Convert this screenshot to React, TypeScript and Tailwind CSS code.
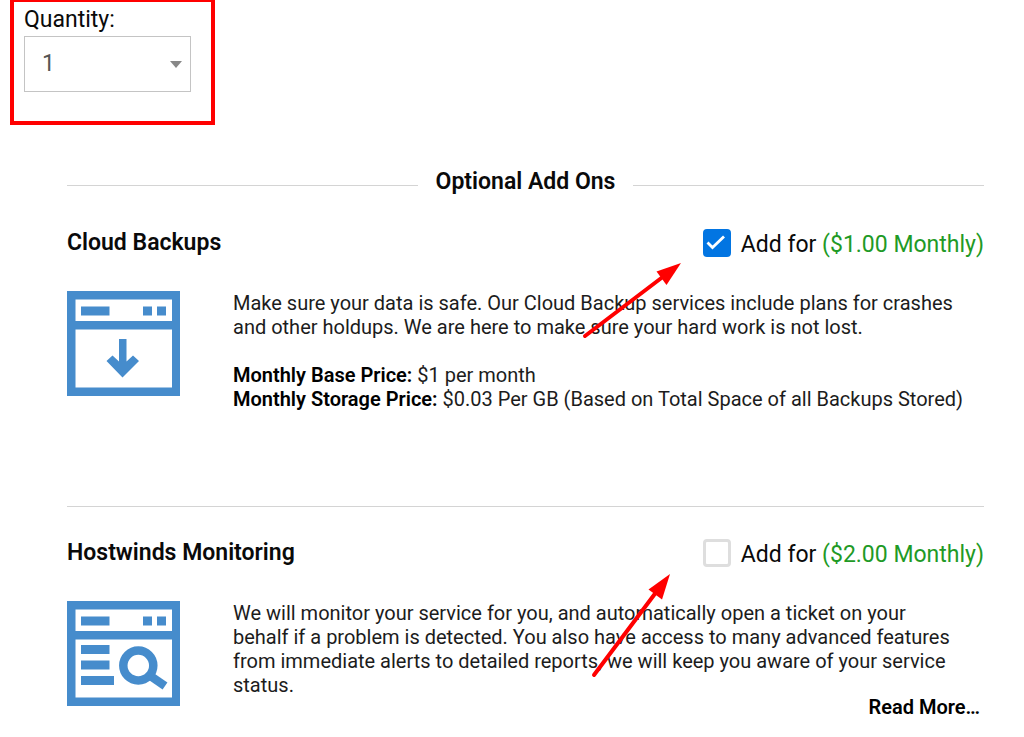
import { useState, type ReactNode } from "react";

type AddOnProps = {
  id: string;
  title: string;
  price: string;
  checked: boolean;
  onChange: (checked: boolean) => void;
  icon: ReactNode;
  arrow: ReactNode;
  children: ReactNode;
};

function WindowIcon({ children }: { children: ReactNode }) {
  return (
    <svg viewBox="0 0 113 105" className="h-[105px] w-[113px] shrink-0" fill="#468ccc" aria-hidden="true">
      <path fillRule="evenodd" d="M0 0H113V105H0ZM8.5 8.5V30H105V8.5ZM8.5 38.5V96.5H105V38.5Z" />
      <path d="M14 15.5H42.5V24.5H14ZM76 15.5H85V24.5H76ZM90 15.5H99V24.5H90Z" />
      {children}
    </svg>
  );
}

function BackupIcon() {
  return (
    <WindowIcon>
      <path d="M52 48H59.5V70.5L66 64.5L72 70L55.5 86.5L39.5 70L45.5 64.5L52 70.5Z" />
    </WindowIcon>
  );
}

function MonitoringIcon() {
  return (
    <WindowIcon>
      <path d="M14 44H42.5V53H14ZM14 59.5H42.5V68.5H14ZM14 75H47V84H14Z" />
      <circle cx="71.3" cy="64.5" r="15" fill="none" stroke="#468ccc" strokeWidth="8.5" />
      <path d="M82 74L98 85" fill="none" stroke="#468ccc" strokeWidth="8.5" />
    </WindowIcon>
  );
}

function AddOn({ id, title, price, checked, onChange, icon, arrow, children }: AddOnProps) {
  return (
    <section className="relative">
      <div className="flex items-start justify-between">
        <h3 className="text-[23px] leading-7 font-semibold">{title}</h3>
        <div className="flex items-start gap-2.5">
          <span className="relative h-7 w-7">
            <input
              id={id}
              type="checkbox"
              checked={checked}
              onChange={(event) => onChange(event.target.checked)}
              className="block h-7 w-7 appearance-none rounded border-[3px] border-[#dedede] bg-white checked:border-[#0275e2] checked:bg-[#0275e2]"
            />
            {checked ? (
              <svg viewBox="0 0 28 28" className="pointer-events-none absolute inset-0 h-7 w-7" aria-hidden="true">
                <path d="M4.5 13.5L9.5 18.5L21 7.5" fill="none" stroke="#fff" strokeWidth="2.8" />
              </svg>
            ) : null}
          </span>
          <label htmlFor={id} className="pt-0.5 text-[23px] leading-7">
            Add for <span className="text-[#1f9a26]">{price}</span>
          </label>
        </div>
      </div>
      <div className="mt-8 flex items-start gap-[53px]">
        {icon}
        <div className="min-w-0 flex-1 text-[20px] leading-6 text-[#1c1c1c]">{children}</div>
      </div>
      {arrow}
    </section>
  );
}

export default function App() {
  const [quantity, setQuantity] = useState("1");
  const [backups, setBackups] = useState(true);
  const [monitoring, setMonitoring] = useState(false);

  return (
    <main className="bg-white font-['Roboto',sans-serif] text-[#0a0a0a]">
      <div className="ml-[10px] h-[125px] w-[205px] border-4 border-t-2 border-[#ff0000] px-[10px] pt-1">
        <label htmlFor="quantity" className="block text-[23px] leading-7">
          Quantity:
        </label>
        <div className="relative mt-0.5 w-[167px]">
          <select
            id="quantity"
            value={quantity}
            onChange={(event) => setQuantity(event.target.value)}
            className="block h-14 w-full appearance-none border border-[#c4c4c4] bg-white px-[17px] text-[23px] text-[#555]"
          >
            {["1", "2", "3", "4", "5"].map((value) => (
              <option key={value}>{value}</option>
            ))}
          </select>
          <svg
            viewBox="0 0 12 7"
            className="pointer-events-none absolute top-[25px] right-[9px] h-[7px] w-3"
            aria-hidden="true"
          >
            <path d="M0 0H12L6 7Z" fill="#888" />
          </svg>
        </div>
      </div>

      <div className="mt-[43px] mr-10 ml-[67px]">
        <div className="flex items-center gap-[18px]">
          <div className="mt-1.5 h-px flex-1 bg-[#d4d4d4]" />
          <h2 className="text-[23px] leading-7 font-semibold">Optional Add Ons</h2>
          <div className="mt-1.5 h-px flex-1 bg-[#d4d4d4]" />
        </div>

        <div className="mt-[33px]">
          <AddOn
            id="cloud-backups"
            title="Cloud Backups"
            price="($1.00 Monthly)"
            checked={backups}
            onChange={setBackups}
            icon={<BackupIcon />}
            arrow={
              <svg
                viewBox="581 261 102 78"
                className="pointer-events-none absolute top-8 right-[301px] h-[78px] w-[102px]"
                aria-hidden="true"
              >
                <path d="M585 336L664 276" stroke="#f00" strokeWidth="4" strokeLinecap="round" />
                <path d="M681 263L656.5 271.5L666.5 285Z" fill="#f00" />
              </svg>
            }
          >
            <p className="pr-5">
              Make sure your data is safe. Our Cloud Backup services include plans for crashes
              and other holdups. We are here to make sure your hard work is not lost.
            </p>
            <p className="mt-6">
              <strong className="font-semibold text-black">Monthly Base Price:</strong> $1 per month
            </p>
            <p>
              <strong className="font-semibold text-black">Monthly Storage Price:</strong> $0.03 Per GB (Based on
              Total Space of all Backups Stored)
            </p>
          </AddOn>
        </div>

        <hr className="mt-[95px] mb-8 border-[#d4d4d4]" />

        <AddOn
          id="monitoring"
          title="Hostwinds Monitoring"
          price="($2.00 Monthly)"
          checked={monitoring}
          onChange={setMonitoring}
          icon={<MonitoringIcon />}
          arrow={
            <svg
              viewBox="590 572 82 107"
              className="pointer-events-none absolute top-[33px] right-[312px] h-[107px] w-[82px]"
              aria-hidden="true"
            >
              <path d="M594 675L657 591" stroke="#f00" strokeWidth="4" strokeLinecap="round" />
              <path d="M670 574L648.5 589.5L662 599.5Z" fill="#f00" />
            </svg>
          }
        >
          <p className="pr-5">
            We will monitor your service for you, and automatically open a ticket on your
            behalf if a problem is detected. You also have access to many advanced features
            from immediate alerts to detailed reports, we will keep you aware of your service
            status.
          </p>
          <div className="flex justify-end pr-1">
            <a href="#" className="leading-5 font-semibold text-black">
              Read More…
            </a>
          </div>
        </AddOn>
      </div>
    </main>
  );
}
